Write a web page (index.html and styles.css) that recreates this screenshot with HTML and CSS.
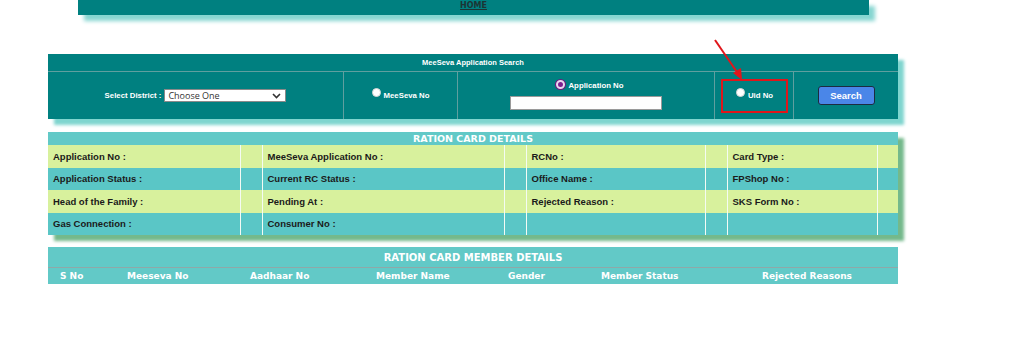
FILE: index.html
```html
<!DOCTYPE html>
<html lang="en">
<head>
    <meta charset="UTF-8">
    <title>MeeSeva Application Search</title>
    <link rel="stylesheet" href="styles.css">
</head>
<body>
<div class="page">
    <!-- top menu -->
    <div class="topbar">
        <a class="home-link" href="#">HOME</a>
    </div>

    <!-- search panel -->
    <div class="search-panel">
        <div class="search-title">MeeSeva Application Search</div>
        <div class="search-row">
            <div class="cell">
                <span class="field-label">Select District :</span>
                <div class="select-box">
                    <span>Choose One</span>
                    <svg class="chevron" width="9" height="6" viewBox="0 0 9 6"><path d="M1 1 L4.5 4.5 L8 1" fill="none" stroke="#333" stroke-width="1.6"/></svg>
                </div>
            </div>
            <div class="cell">
                <span class="radio"></span><span class="field-label">MeeSeva No</span>
            </div>
            <div class="cell cell-app">
                <div class="app-choice"><span class="radio checked"></span><span class="field-label">Application No</span></div>
                <div class="text-box"></div>
            </div>
            <div class="cell">
                <div class="marked">
                    <span class="radio"></span><span class="field-label">Uid No</span>
                </div>
            </div>
            <div class="cell">
                <button class="search-btn">Search</button>
            </div>
        </div>
    </div>

    <!-- ration card details -->
    <table class="details">
        <colgroup>
            <col class="c-label1"><col class="c-gap">
            <col class="c-label2"><col class="c-gap">
            <col class="c-label3"><col class="c-gap">
            <col class="c-label4"><col class="c-end">
        </colgroup>
        <tr><th colspan="8">RATION CARD DETAILS</th></tr>
        <tr class="light">
            <td>Application No :</td><td></td>
            <td>MeeSeva Application No :</td><td></td>
            <td>RCNo :</td><td></td>
            <td>Card Type :</td><td></td>
        </tr>
        <tr class="dark">
            <td>Application Status :</td><td></td>
            <td>Current RC Status :</td><td></td>
            <td>Office Name :</td><td></td>
            <td>FPShop No :</td><td></td>
        </tr>
        <tr class="light">
            <td>Head of the Family :</td><td></td>
            <td>Pending At :</td><td></td>
            <td>Rejected Reason :</td><td></td>
            <td>SKS Form No :</td><td></td>
        </tr>
        <tr class="dark">
            <td>Gas Connection :</td><td></td>
            <td>Consumer No :</td><td></td>
            <td></td><td></td>
            <td></td><td></td>
        </tr>
    </table>

    <!-- member details -->
    <div class="members">
        <div class="members-title">RATION CARD MEMBER DETAILS</div>
        <div class="members-head">
            <span>S No</span>
            <span>Meeseva No</span>
            <span>Aadhaar No</span>
            <span>Member Name</span>
            <span>Gender</span>
            <span>Member Status</span>
            <span>Rejected Reasons</span>
        </div>
    </div>

    <!-- annotation arrow -->
    <svg class="annotation" width="60" height="50" viewBox="0 0 60 50">
        <line x1="4" y1="3" x2="28" y2="38" stroke="#e0161b" stroke-width="2"/>
        <path d="M31 43 L22 36 L30 31 Z" fill="#e0161b"/>
    </svg>
</div>
</body>
</html>
```

FILE: styles.css
```css
body {
    margin: 0;
    background-color: #ffffff;
    font-family: "Liberation Sans", Arial, sans-serif;
}
.page {
    position: relative;
    width: 1024px;
    height: 345px;
    overflow: hidden;
}

.topbar {
    margin-left: 78px;
    width: 791px;
    height: 15px;
    background-color: #008080;
    box-shadow: 6px 6px 4px #86d6d1;
    display: flex;
    justify-content: center;
    align-items: flex-start;
}
.home-link {
    font-family: "DejaVu Sans", Verdana, sans-serif;
    font-size: 8px;
    font-weight: bold;
    color: #1c3434;
    line-height: 11px;
}

.search-panel {
    margin: 39px 0 0 48px;
    width: 850px;
    background-color: #008080;
    box-shadow: 6px 6px 3px #7fd5cf;
}
.search-title {
    height: 17px;
    line-height: 17px;
    text-align: center;
    color: #ffffff;
    font-size: 7.5px;
    font-weight: bold;
    border-bottom: 1px solid #5f9f9f;
}
.search-row {
    display: grid;
    grid-template-columns: 295px 114px 257px 79px 105px;
    height: 47px;
}
.cell {
    display: flex;
    align-items: center;
    justify-content: center;
    border-left: 1px solid #5f9f9f;
}
.cell:first-child {
    border-left: none;
}
.field-label {
    color: #ffffff;
    font-size: 7.8px;
    font-weight: bold;
}
.select-box {
    margin-left: 3px;
    width: 114px;
    height: 11px;
    background-color: #ffffff;
    border: 1px solid #8a8a8a;
    display: flex;
    align-items: center;
    justify-content: space-between;
    padding: 0 3px;
    box-sizing: content-box;
    font-family: "Open Sans", sans-serif;
    font-size: 9px;
    color: #333;
}
.chevron {
    margin-right: 1px;
}
.radio {
    display: inline-block;
    width: 9px;
    height: 9px;
    border-radius: 50%;
    background-color: #ffffff;
    box-sizing: border-box;
    border: 1px solid #d6d6d6;
    margin-right: 3px;
    position: relative;
    top: -3px;
}
.radio.checked {
    background-color: #7b1f8e;
    border: 2px solid #e8d8ee;
    box-shadow: 0 0 0 1px #6e1a80;
}
.cell-app {
    flex-direction: column;
    justify-content: flex-start;
    padding-top: 9px;
    box-sizing: border-box;
}
.app-choice {
    display: flex;
    align-items: center;
    margin-left: 8px;
}
.app-choice .radio {
    top: -1px;
}
.text-box {
    margin-top: 6px;
    width: 152px;
    height: 14px;
    box-sizing: border-box;
    background-color: #ffffff;
    border: 1px solid #9a9a9a;
}
.marked {
    width: 67px;
    height: 34px;
    box-sizing: border-box;
    border: 2px solid #e0161b;
    margin-left: 1px;
    display: flex;
    align-items: center;
    justify-content: center;
}
.search-btn {
    width: 57px;
    height: 19px;
    margin-left: 0;
    background-color: #4a86e8;
    border: 1px solid #1c2b40;
    border-radius: 3px;
    color: #ffffff;
    font-family: "Liberation Sans", Arial, sans-serif;
    font-size: 9.5px;
    font-weight: bold;
    padding: 0;
}

.details {
    margin: 13px 0 0 48px;
    width: 850px;
    border-collapse: collapse;
    table-layout: fixed;
    box-shadow: 6px 6px 3px #74b98b;
}
.c-label1 { width: 192px; }
.c-label2 { width: 242px; }
.c-label3 { width: 179px; }
.c-label4 { width: 150px; }
.c-gap { width: 22px; }
.c-end { width: 21px; }
.details th {
    height: 13px;
    padding: 0;
    background-color: #62c9c7;
    color: #ffffff;
    font-family: "DejaVu Sans", Verdana, sans-serif;
    font-size: 9.5px;
    font-weight: bold;
    line-height: 13px;
}
.details td {
    height: 22.5px;
    padding: 0 0 0 5px;
    font-size: 9.5px;
    font-weight: bold;
    color: #1a1a1a;
    border-left: 1px solid #f4fbf4;
    white-space: nowrap;
}
.details td:first-child {
    border-left: none;
}
.details tr.light td {
    background-color: #d8f19d;
}
.details tr.dark td {
    background-color: #5ac6c6;
}

.members {
    margin: 12px 0 0 48px;
    width: 850px;
    background-color: #62c9c7;
    font-family: "DejaVu Sans", Verdana, sans-serif;
    font-weight: bold;
    color: #ffffff;
}
.members-title {
    height: 20px;
    line-height: 21px;
    text-align: center;
    font-size: 10px;
    border-bottom: 1px solid #8fa8a8;
}
.members-head {
    display: grid;
    grid-template-columns: 67px 123px 126px 132px 93px 161px 136px;
    padding-left: 12px;
    height: 16px;
    line-height: 16px;
    font-size: 9px;
}

.annotation {
    position: absolute;
    left: 711px;
    top: 37px;
}
```
